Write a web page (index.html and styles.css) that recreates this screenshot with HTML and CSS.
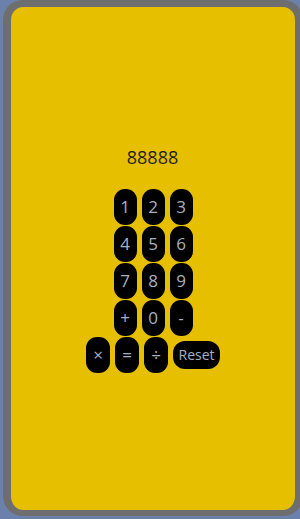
FILE: index.html
```html
<!DOCTYPE html>
<html>
<head>
    <title>Calculator</title>
    <link rel="stylesheet" href="styles.css">
</head>
<body>
    <div class="phone">
        <div class="screen">
            <div class="display">88888</div>
            <div class="pad">
                <div class="row">
                    <button class="key">1</button>
                    <button class="key">2</button>
                    <button class="key">3</button>
                </div>
                <div class="row">
                    <button class="key">4</button>
                    <button class="key">5</button>
                    <button class="key">6</button>
                </div>
                <div class="row">
                    <button class="key">7</button>
                    <button class="key">8</button>
                    <button class="key">9</button>
                </div>
                <div class="row">
                    <button class="key">+</button>
                    <button class="key">0</button>
                    <button class="key">-</button>
                </div>
                <div class="row">
                    <button class="key op">&times;</button>
                    <button class="key op">=</button>
                    <button class="key op">&divide;</button>
                    <button class="key reset">Reset</button>
                </div>
            </div>
        </div>
    </div>
</body>
</html>
```

FILE: styles.css
```css
html, body {
    overflow: hidden;
}
body {
    margin: 0;
    padding: 0;
    background: #6b80aa;
    font-family: "Open Sans", "Noto Sans", sans-serif;
    height: 519px;
}
.phone {
    margin-left: 3px;
    width: 284px;
    height: 503px;
    border-style: solid;
    border-color: #6e6e6e;
    border-width: 7px 8px 6px 8px;
    border-radius: 20px;
    background: #e6c000;
}
.screen {
    height: 100%;
    display: flex;
    flex-direction: column;
    align-items: center;
    justify-content: center;
}
.display {
    font-size: 18px;
    line-height: 24px;
    color: #1e1e1e;
    margin-bottom: 20px;
    margin-left: -1px;
}
.pad {
    display: flex;
    flex-direction: column;
    gap: 1px;
}
.row {
    display: flex;
    justify-content: center;
    align-items: center;
    gap: 5px;
}
.key {
    width: 23px;
    height: 36px;
    padding: 0;
    border: none;
    border-radius: 11px;
    background: #000;
    color: #a8b0c0;
    font-family: "Open Sans", "Noto Sans", sans-serif;
    font-size: 17px;
    cursor: pointer;
}
.key.op {
    width: 24px;
}
.key.reset {
    width: 47px;
    height: 28px;
    border-radius: 12px;
    font-size: 14px;
}
```
